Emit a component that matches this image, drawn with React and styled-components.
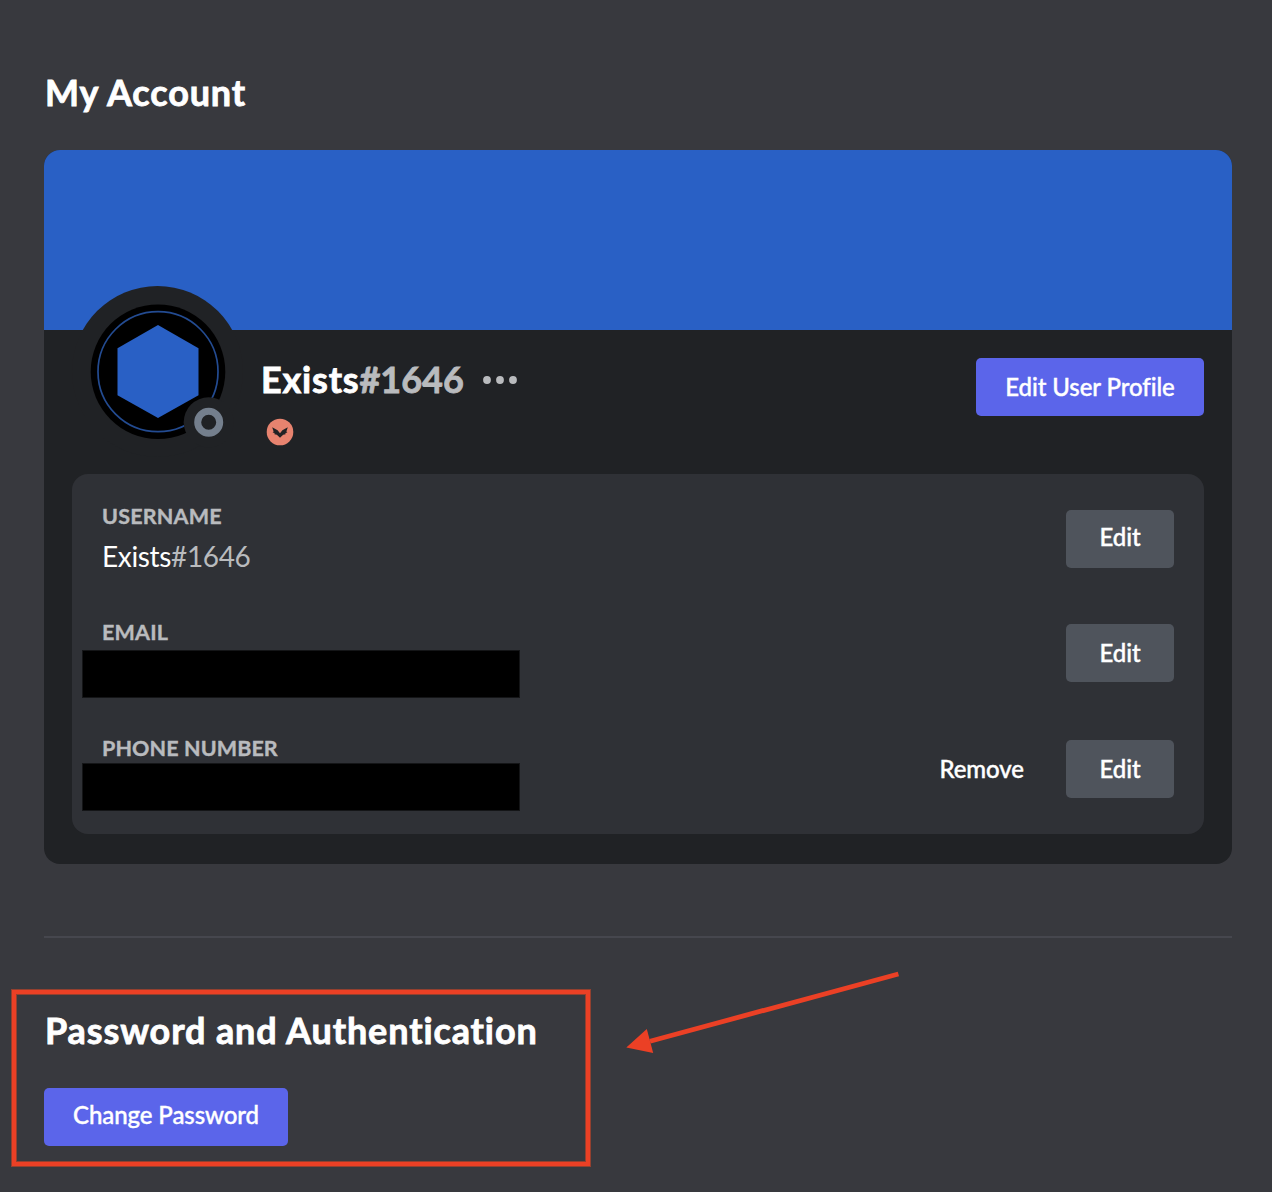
import React from "react";
import styled, { createGlobalStyle } from "styled-components";

const GlobalStyle = createGlobalStyle`
  *, *::before, *::after { box-sizing: border-box; }
  body {
    margin: 0;
    background: #38393e;
    color: #fff;
    font-family: Lato, "Open Sans", sans-serif;
    font-variant-ligatures: none;
    -webkit-font-smoothing: antialiased;
  }
`;

const Page = styled.main`
  position: relative;
  display: flex;
  flex-direction: column;
  height: 1192px;
  padding: 68px 40px 0 44px;
  overflow: hidden;
`;

const Heading = styled.h2`
  margin: 0 0 0 1px;
  height: 48px;
  font-size: 36px;
  font-weight: 700;
  line-height: 48px;
  letter-spacing: 0.88px;
  -webkit-text-stroke: 0.8px currentColor;
  white-space: nowrap;
`;

const Card = styled.section`
  display: flex;
  flex: none;
  flex-direction: column;
  height: 714px;
  margin-top: 34px;
  border-radius: 16px;
  background: #202225;
  overflow: hidden;
`;

const Banner = styled.div`
  flex: none;
  height: 180px;
  background: #2960c5;
`;

const Profile = styled.header`
  display: flex;
  flex: none;
  height: 144px;
  padding: 0 28px;
`;

const AvatarArt = styled.svg`
  flex: none;
  width: 171px;
  height: 171px;
  margin: -44px 0 0 0;
`;

const Identity = styled.div`
  display: flex;
  flex: 1;
  flex-direction: column;
  padding: 25px 0 0 18px;
`;

const NameLine = styled.div`
  display: flex;
  align-items: center;
  height: 48px;
  font-size: 36px;
  font-weight: 700;
  line-height: 48px;
  -webkit-text-stroke: 0.8px currentColor;
`;

const Name = styled.span`
  letter-spacing: ${(p) => p.$spacing || "0"};
`;

const Tag = styled.span`
  color: #b9bbbe;
`;

const Dots = styled.svg`
  width: 36px;
  height: 10px;
  margin: 2px 0 0 18px;
  fill: #b9bbbe;
`;

const Badge = styled.svg`
  width: 28px;
  height: 28px;
  margin: 15px 0 0 5px;
`;

const Button = styled.button`
  flex: none;
  width: ${(p) => p.$width};
  height: 58px;
  padding: 0 0 ${(p) => p.$lift || "0"};
  border: 0;
  border-radius: 5px;
  background: ${(p) => (p.$secondary ? "#4f545c" : "#5b65ea")};
  color: #fff;
  font: 500 24px/30px Lato, "Open Sans", sans-serif;
  font-variant-ligatures: none;
  -webkit-text-stroke: 0.4px currentColor;
  letter-spacing: -0.08px;
`;

const ProfileAction = styled.div`
  padding-top: 28px;
`;

const Panel = styled.div`
  display: flex;
  flex: none;
  flex-direction: column;
  height: 360px;
  margin: 0 28px;
  padding: 27px 30px 0;
  border-radius: 16px;
  background: #2f3136;
`;

const Row = styled.div`
  display: flex;
  flex: none;
  justify-content: space-between;
  height: 116px;
`;

const Field = styled.div`
  display: flex;
  flex-direction: column;
`;

const Label = styled.h3`
  margin: 0;
  height: 32px;
  color: #b9bbbe;
  font-size: 21.5px;
  font-weight: 700;
  line-height: 30px;
  letter-spacing: ${(p) => p.$spacing || "0.2px"};
  -webkit-text-stroke: 0.4px currentColor;
`;

const Value = styled.div`
  margin-top: 4px;
  font-size: 28px;
  line-height: 38px;
  letter-spacing: -0.35px;
`;

const Redacted = styled.div`
  width: 438px;
  height: 48px;
  margin: ${(p) => p.$gap} 0 0 -20px;
  border: 1px solid #141517;
  background: #000;
`;

const Actions = styled.div`
  display: flex;
  align-items: flex-start;
  gap: 42px;
  padding-top: ${(p) => p.$top};
`;

const TextButton = styled.button`
  height: 58px;
  padding: 0;
  border: 0;
  background: none;
  color: #fff;
  font: 500 24px/30px Lato, "Open Sans", sans-serif;
  letter-spacing: -0.08px;
  -webkit-text-stroke: 0.4px currentColor;
`;

const Divider = styled.hr`
  flex: none;
  width: 100%;
  height: 2px;
  margin: 72px 0 0;
  border: 0;
  background: #46474e;
`;

const Security = styled.section`
  display: flex;
  flex-direction: column;
  align-items: flex-start;
  gap: 34px;
  padding-top: 68px;
`;

const Highlight = styled.div`
  position: absolute;
  left: 12px;
  top: 990px;
  width: 578px;
  height: 176px;
  border: 4px solid #eb4025;
  box-shadow: 0 0 0 1px #93402f, inset 0 0 0 1px #93402f;
  pointer-events: none;
`;

const Arrow = styled.svg`
  position: absolute;
  left: 620px;
  top: 965px;
  width: 285px;
  height: 95px;
  pointer-events: none;
`;

function Avatar() {
  return (
    <AvatarArt viewBox="72 286 171 171" aria-label="Avatar">
      <circle cx="157.5" cy="371.5" r="85.5" fill="#202225" />
      <circle cx="158" cy="371.7" r="67.3" fill="#000" />
      <circle cx="158" cy="371.7" r="60" fill="none" stroke="#234b91" strokeWidth="1.7" />
      <path d="M158 325L198.5 348.3V395.3L158 418L117.5 395.3V348.3Z" fill="#2960c5" />
      <circle cx="208.7" cy="422.3" r="25" fill="#202225" />
      <circle cx="208.7" cy="422.3" r="11" fill="none" stroke="#747f8d" strokeWidth="7" />
    </AvatarArt>
  );
}

export default function App() {
  return (
    <>
      <GlobalStyle />
      <Page>
        <Heading>My Account</Heading>
        <Card>
          <Banner />
          <Profile>
            <Avatar />
            <Identity>
              <NameLine>
                <Name $spacing="0.8px">Exists</Name>
                <Tag>#1646</Tag>
                <Dots viewBox="0 0 36 10">
                  <circle cx="5" cy="5" r="3.9" />
                  <circle cx="18" cy="5" r="3.9" />
                  <circle cx="31" cy="5" r="3.9" />
                </Dots>
              </NameLine>
              <Badge viewBox="266 418 28 28">
                <circle cx="280" cy="432" r="13.3" fill="#e7836f" />
                <path
                  d="M272.2 427.3L277.6 430.3L280 433.2L282.4 430.3L287.8 427.3L286.4 431.4L287.4 432.4L285.4 432.9L285.6 434.2L283.2 434.7L280 437.8L276.8 434.7L274.4 434.2L274.6 432.9L272.6 432.4L273.6 431.4Z"
                  fill="#202225"
                />
              </Badge>
            </Identity>
            <ProfileAction>
              <Button $width="228px">Edit User Profile</Button>
            </ProfileAction>
          </Profile>
          <Panel>
            <Row>
              <Field>
                <Label>USERNAME</Label>
                <Value>
                  Exists<Tag>#1646</Tag>
                </Value>
              </Field>
              <Actions $top="9px">
                <Button $secondary $width="108px" $lift="4px">Edit</Button>
              </Actions>
            </Row>
            <Row>
              <Field>
                <Label>EMAIL</Label>
                <Redacted $gap="1px" />
              </Field>
              <Actions $top="7px">
                <Button $secondary $width="108px">Edit</Button>
              </Actions>
            </Row>
            <Row>
              <Field>
                <Label $spacing="0.1px">PHONE NUMBER</Label>
                <Redacted $gap="-2px" />
              </Field>
              <Actions $top="7px">
                <TextButton>Remove</TextButton>
                <Button $secondary $width="108px">Edit</Button>
              </Actions>
            </Row>
          </Panel>
        </Card>
        <Divider />
        <Security>
          <Heading>Password and Authentication</Heading>
          <Button $width="244px" $lift="4px">Change Password</Button>
        </Security>
        <Highlight />
        <Arrow viewBox="620 965 285 95">
          <path d="M898.4 974L650 1041.2" stroke="#eb4025" strokeWidth="4.8" fill="none" />
          <path d="M626.3 1047.6L646.8 1029L653.2 1053Z" fill="#eb4025" />
        </Arrow>
      </Page>
    </>
  );
}
